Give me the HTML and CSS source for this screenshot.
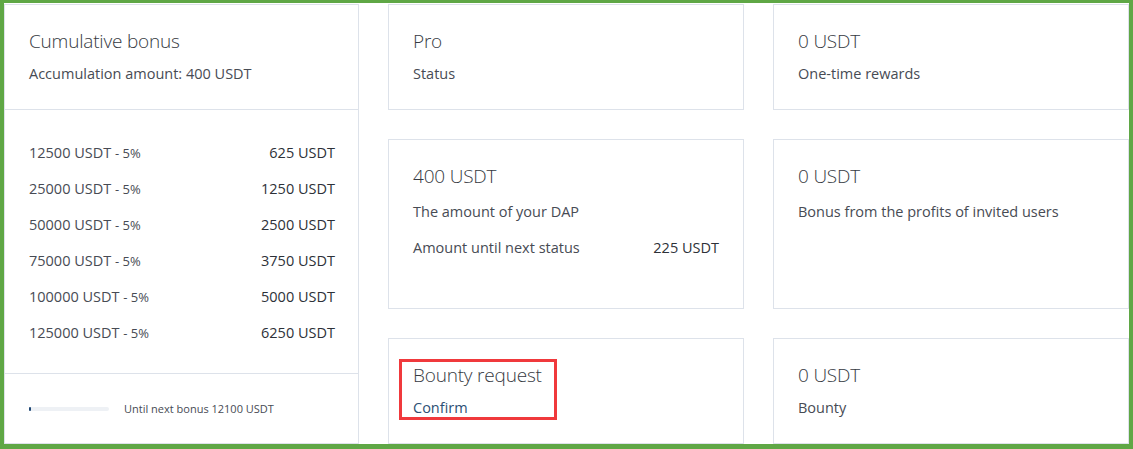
FILE: index.html
```html
<!DOCTYPE html>
<html lang="en">
<head>
  <meta charset="UTF-8" />
  <title>Bonus overview</title>
  <link rel="stylesheet" href="styles.css">
</head>
<body>
  <div class="frame">
    <div class="board">
      <div class="card bonus">
        <div class="bonus-head">
          <div class="title">Cumulative bonus</div>
          <div class="sub">Accumulation amount: 400 USDT</div>
        </div>
        <div class="levels">
          <div class="level"><span>12500 USDT <small>- 5%</small></span><b>625 USDT</b></div>
          <div class="level"><span>25000 USDT <small>- 5%</small></span><b>1250 USDT</b></div>
          <div class="level"><span>50000 USDT <small>- 5%</small></span><b>2500 USDT</b></div>
          <div class="level"><span>75000 USDT <small>- 5%</small></span><b>3750 USDT</b></div>
          <div class="level"><span>100000 USDT <small>- 5%</small></span><b>5000 USDT</b></div>
          <div class="level"><span>125000 USDT <small>- 5%</small></span><b>6250 USDT</b></div>
        </div>
        <div class="bonus-foot">
          <div class="bar"><div class="bar-fill" style="width: 3%"></div></div>
          <span>Until next bonus 12100 USDT</span>
        </div>
      </div>

      <div class="card">
        <div class="title">Pro</div>
        <div class="sub">Status</div>
      </div>
      <div class="card">
        <div class="title">0 USDT</div>
        <div class="sub">One-time rewards</div>
      </div>

      <div class="card">
        <div class="title">400 USDT</div>
        <div class="sub sub-wide">The amount of your DAP</div>
        <div class="row"><span>Amount until next status</span><b>225 USDT</b></div>
      </div>
      <div class="card">
        <div class="title">0 USDT</div>
        <div class="sub sub-wide">Bonus from the profits of invited users</div>
      </div>

      <div class="card marked">
        <div class="title">Bounty request</div>
        <a class="sub link" href="#">Confirm</a>
        <div class="highlight"></div>
      </div>
      <div class="card">
        <div class="title">0 USDT</div>
        <div class="sub">Bounty</div>
      </div>
    </div>
  </div>
</body>
</html>
```

FILE: styles.css
```css
body {
  margin: 0;
  font-family: "Open Sans", "Noto Sans", sans-serif;
  color: #474b54;
  background: #fff;
}
.frame {
  width: 1133px;
  height: 449px;
  box-sizing: border-box;
  border: solid #5fa745;
  border-width: 3px 4px 5px 4px;
  padding-top: 1px;
  overflow: hidden;
  background: #fff;
}
.board {
  display: grid;
  grid-template-columns: 355px 356px 1fr;
  grid-template-rows: 106px 170px 106px;
  gap: 29px;
}
.card {
  position: relative;
  border: 1px solid #dde2ea;
  padding: 24px 24px 0;
  box-sizing: border-box;
}
.title {
  font-size: 19px;
  line-height: 24px;
  font-weight: 300;
  letter-spacing: -0.2px;
  color: #363a42;
}
.sub {
  display: block;
  margin-top: 11px;
  font-size: 14.5px;
  line-height: 20px;
}
.sub-wide {
  margin-top: 14px;
}
.link {
  color: #2c4f74;
  text-decoration: none;
}
.row {
  display: flex;
  justify-content: space-between;
  margin-top: 16px;
  font-size: 14.5px;
  line-height: 20px;
}
.row b, .level b {
  font-weight: 400;
  color: #2d3138;
}

.bonus {
  grid-row: 1 / 4;
  padding: 0;
  display: flex;
  flex-direction: column;
}
.bonus-head {
  height: 105px;
  box-sizing: border-box;
  padding: 24px 24px 0;
  border-bottom: 1px solid #dde2ea;
}
.levels {
  padding: 25px 23px 22px 24px;
  border-bottom: 1px solid #dde2ea;
}
.level {
  display: flex;
  justify-content: space-between;
  font-size: 14.5px;
  line-height: 36px;
}
.level small {
  font-size: 13px;
  line-height: 1;
}
.bonus-foot {
  flex: 1;
  display: flex;
  align-items: center;
  gap: 15px;
  padding: 0 24px;
  font-size: 11px;
}
.bar {
  width: 80px;
  height: 4px;
  background: #eef1f5;
  border-radius: 2px;
}
.bar-fill {
  height: 100%;
  background: #1f4775;
  border-radius: 2px;
}

.highlight {
  position: absolute;
  left: 10px;
  top: 20px;
  width: 158px;
  height: 61px;
  box-sizing: border-box;
  border: 3px solid #f0393c;
}
```
